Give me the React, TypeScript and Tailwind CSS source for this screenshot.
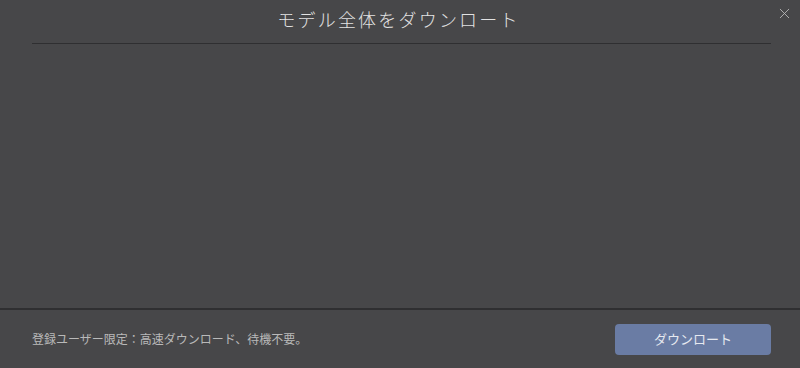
import React from 'react';
import { X } from 'lucide-react';

export default function App() {
  return (
    <div
      className="relative flex h-[368px] w-[800px] flex-col overflow-hidden bg-[#474749]"
      style={{ fontFamily: '"Noto Sans CJK JP", "Noto Sans", sans-serif' }}
    >
      {/* Header */}
      <div className="pl-8 pr-[29px]">
        <div className="flex h-[44px] items-center justify-center border-b border-[#2f2f31] pb-[4px]">
          <h1 className="pr-[6px] text-[18px] font-light tracking-[2.2px] text-[#e2e2e2]">
            モデル全体をダウンロート
          </h1>
        </div>
      </div>
      <button className="absolute right-[7px] top-[5px] text-[#bdbdbd]">
        <X className="h-[17px] w-[17px]" strokeWidth={1.2} />
      </button>

      {/* Body */}
      <div className="flex-1" />

      {/* Footer */}
      <div className="flex h-[60px] items-center justify-between border-t-2 border-[#2f2f31] pl-8 pr-[29px]">
        <span className="text-[12px] text-[#b9b9b9]">登録ユーザー限定：高速ダウンロード、待機不要。</span>
        <button className="h-[31px] w-[156px] rounded-[4px] bg-[#6a7ca4] text-[13px] text-[#e6e9f0]">
          ダウンロート
        </button>
      </div>
    </div>
  );
}
